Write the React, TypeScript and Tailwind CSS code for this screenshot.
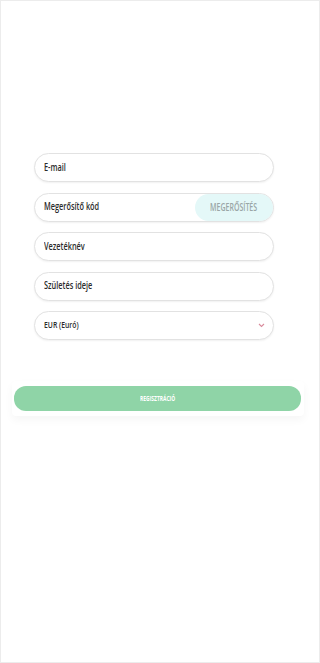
import React from "react";

const font = { fontFamily: '"Open Sans", "DejaVu Sans", sans-serif' };

function Field({ label, children }: { label: string; children?: React.ReactNode }) {
  return (
    <div className="flex h-[29px] w-[240px] items-center rounded-full border border-[#e2e2e2] bg-white pl-[9px] shadow-[0_1px_2px_rgba(0,0,0,0.06)]">
      <span className="origin-left scale-x-[0.7] whitespace-nowrap text-[10.5px] font-semibold text-[#2b2b2b]">{label}</span>
      <div className="ml-auto flex h-full items-center">{children}</div>
    </div>
  );
}

export default function App() {
  return (
    <div style={font} className="h-[663px] w-[320px] overflow-hidden border border-[#ececec] bg-white">
      <div className="flex flex-col items-start gap-[10.5px] pt-[152px] pl-[33px]">
        <Field label="E-mail" />
        <Field label="Megerősítő kód">
          <div className="flex h-full w-[78px] items-center justify-center rounded-full bg-[#e4f8f8]">
            <span className="scale-x-[0.7] whitespace-nowrap text-[10px] font-semibold text-[#9aa6a6]">MEGERŐSÍTÉS</span>
          </div>
        </Field>
        <Field label="Vezetéknév" />
        <Field label="Születés ideje" />
        <div className="flex h-[29px] w-[240px] items-center rounded-full border border-[#e2e2e2] bg-white pl-[9px] pr-[8px] shadow-[0_1px_2px_rgba(0,0,0,0.06)]">
          <span className="origin-left scale-x-[0.72] whitespace-nowrap text-[9.5px] font-semibold text-[#2b2b2b]">EUR (Euró)</span>
          <svg className="ml-auto" width="7" height="5" viewBox="0 0 7 5" fill="none">
            <path d="M1 1l2.5 2.5L6 1" stroke="#d98b9c" strokeWidth="1.1" />
          </svg>
        </div>
      </div>
      <div className="mt-[41px] ml-[11px] w-[292px] rounded-[4px] bg-white py-[5px] shadow-[0_4px_8px_rgba(0,0,0,0.04)]">
        <div className="ml-[2px] flex h-[25px] w-[287px] items-center justify-center rounded-[12px] bg-[#8fd4a7]">
          <span className="scale-x-[0.66] whitespace-nowrap text-[7.5px] font-bold text-white">REGISZTRÁCIÓ</span>
        </div>
      </div>
    </div>
  );
}
